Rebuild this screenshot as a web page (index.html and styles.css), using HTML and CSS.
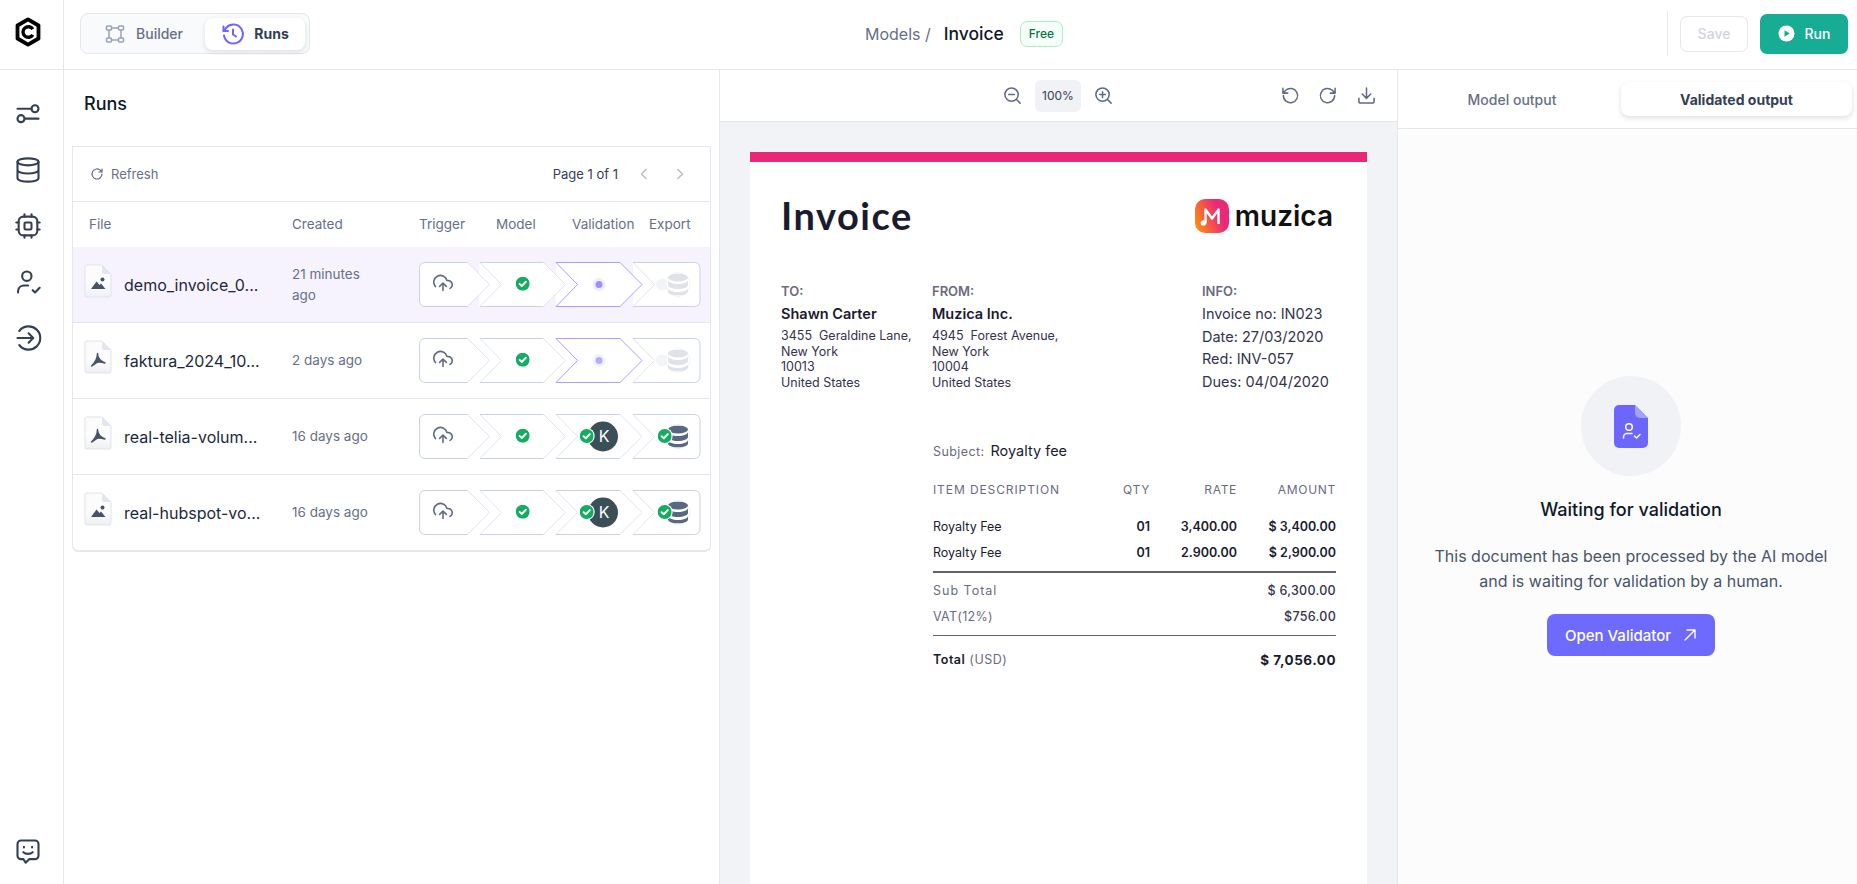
FILE: index.html
```html
<!DOCTYPE html>
<html lang="en">
<head>
    <meta charset="UTF-8">
    <title>Invoice - Runs</title>
    <link rel="stylesheet" href="styles.css">
</head>
<body>
    <svg class="defs" width="0" height="0">
        <defs>
            <linearGradient id="docGrad" x1="0" y1="0" x2="0" y2="1"><stop offset="0.6" stop-color="#fcfcfd"/><stop offset="1" stop-color="#eef0f4"/></linearGradient>
            <linearGradient id="brandGrad" x1="0" y1="0.7" x2="1" y2="0.3"><stop offset="0" stop-color="#ff8a12"/><stop offset="0.7" stop-color="#ea2a78"/></linearGradient>
        </defs>
        <symbol id="i-cloud" viewBox="0 0 24 24"><path d="M16 16l-4-4-4 4M12 12v9M20.4 18.4A5 5 0 0 0 18 9h-1.300A8 8 0 1 0 3 16.300" fill="none" stroke="#5f6b85" stroke-width="1.900" stroke-linecap="round" stroke-linejoin="round"/></symbol>
        <symbol id="i-check" viewBox="0 0 14 14"><circle cx="7" cy="7" r="7" fill="#12ad5e"/><path d="M3.900 7.200l2.200 2.100 4-4.200" fill="none" stroke="#fff" stroke-width="2" stroke-linecap="round" stroke-linejoin="round"/></symbol>
        <symbol id="i-db" viewBox="0 0 20 22"><ellipse cx="10" cy="4" rx="10" ry="4" fill="currentColor"/><path d="M0 6.500c0 2.200 4.500 4 10 4s10-1.800 10-4v5c0 2.200-4.500 4-10 4s-10-1.800-10-4zM0 14.500c0 2.200 4.500 4 10 4s10-1.800 10-4V18c0 2.200-4.500 4-10 4S0 20.200 0 18z" fill="currentColor"/></symbol>
        <symbol id="i-image" viewBox="0 0 28 34"><path d="M1 3a2 2 0 0 1 2-2h15l9 9v21a2 2 0 0 1-2 2H3a2 2 0 0 1-2-2z" fill="url(#docGrad)" stroke="#dfe3ea"/><path d="M18 1v7a2 2 0 0 0 2 2h7z" fill="#e3e6ec"/><path d="M7 25l5.500-7.500 3 3.500 1.500-1.500 4.500 5.500z" fill="#475467"/><circle cx="18.500" cy="15.500" r="2" fill="#475467"/></symbol>
        <symbol id="i-pdf" viewBox="0 0 28 34"><path d="M1 3a2 2 0 0 1 2-2h15l9 9v21a2 2 0 0 1-2 2H3a2 2 0 0 1-2-2z" fill="url(#docGrad)" stroke="#dfe3ea"/><path d="M18 1v7a2 2 0 0 0 2 2h7z" fill="#e3e6ec"/><path d="M13.500 13.500c0 3 1 6.500 7.500 9.500-3.500-1-6.500-1.500-8-.5-1.500 1-3.500 2.500-5.500 3.500 2.500-2.500 6-6.500 6-12.500z" fill="#475467" stroke="#475467" stroke-width="1.400" stroke-linejoin="round"/></symbol>
        <symbol id="i-pipe" viewBox="0 0 282 45">
            <path class="seg" d="M214 .5H275.500A5.500 5.500 0 0 1 281 6V39A5.500 5.500 0 0 1 275.500 44.500H214z"/>
            <path class="seg" d="M137 .5H201L223 22.500 201 44.500H137z"/>
            <path class="seg" d="M60 .5H124.500L146.500 22.500 124.500 44.500H60z"/>
            <path class="seg" d="M6 .5H48.500L70.500 22.500 48.500 44.500H6A5.500 5.500 0 0 1 .5 39V6A5.500 5.500 0 0 1 6 .5z"/>
            <path class="edge" d="M48.500 .5H6A5.500 5.500 0 0 0 .5 6V39A5.500 5.500 0 0 0 6 44.500H48.500"/>
            <path class="diag" d="M48.500 .5L70.500 22.500 48.500 44.500"/>
            <path class="edge" d="M61 .5H124.500M61 44.500H124.500"/>
            <path class="diag" d="M61 .5L82.500 22.500 61 44.500M124.500 .5L146.500 22.500 124.500 44.500"/>
            <path class="edge" d="M214 .5H275.500A5.500 5.500 0 0 1 281 6V39A5.500 5.500 0 0 1 275.500 44.500H214"/>
            <path class="diag" d="M214 .5L235.500 22.500 214 44.500"/>
            <use href="#i-cloud" x="14" y="11" width="20" height="20"/>
            <use href="#i-check" x="96.700" y="14.700" width="14" height="14"/>
        </symbol>
        <symbol id="i-pipe-waiting" viewBox="0 0 282 45">
            <use href="#i-pipe" width="282" height="45"/>
            <path class="active" d="M137 .5H201L223 22.500 201 44.500H137L158.500 22.500z"/>
            <circle cx="243" cy="22.500" r="6" fill="#f3f4f6"/>
            <circle cx="259" cy="22.500" r="12" fill="#fff" stroke="#f2f4f7"/>
            <use href="#i-db" x="249" y="11.500" width="20" height="22" color="#e0e2e6"/>
        </symbol>
        <symbol id="i-pipe-done" viewBox="0 0 282 45">
            <use href="#i-pipe" width="282" height="45"/>
            <path class="edge" d="M137 .5H201M137 44.500H201"/>
            <path class="diag" d="M137 .5L158.500 22.500 137 44.500M201 .5L223 22.500 201 44.500"/>
            <circle cx="184" cy="22.500" r="15" fill="#3b4f58"/>
            <circle cx="259" cy="22.500" r="12" fill="#fff" stroke="#eef0f4"/>
            <use href="#i-db" x="249" y="11.500" width="20" height="22" color="#5a6783"/>
            <circle cx="245.700" cy="22" r="8" fill="#fff"/>
            <use href="#i-check" x="238.700" y="15" width="14" height="14"/>
        </symbol>
        <symbol id="i-pipe-badge" viewBox="0 0 282 45">
            <circle cx="167.700" cy="22" r="8" fill="#fff"/>
            <use href="#i-check" x="160.700" y="15" width="14" height="14"/>
        </symbol>
    </svg>

    <header class="topbar">
        <div class="logo-cell">
            <svg width="26" height="30" viewBox="0 0 26 30"><path d="M13 2.300L23.500 8.500V21.500L13 27.700 2.500 21.500V8.500z" fill="#fff" stroke="#000" stroke-width="3.800" stroke-linejoin="round"/><path d="M17.800 12.200A5.300 5.300 0 1 0 17.800 17.800" fill="none" stroke="#000" stroke-width="3.400"/></svg>
        </div>
        <div class="mode-tabs">
            <div class="mode-tab">
                <svg width="20" height="20" viewBox="0 0 20 20" fill="none" stroke="#98a2b3" stroke-width="1.500"><rect x="1.500" y="2" width="5" height="4" rx="1"/><rect x="13.500" y="2" width="5" height="4" rx="1"/><rect x="1.500" y="14" width="5" height="4" rx="1"/><rect x="13.500" y="14" width="5" height="4" rx="1"/><path d="M6.500 4h7M6.500 16h7M4 6v8M16 6v8"/></svg>
                Builder
            </div>
            <div class="mode-tab on">
                <svg width="24" height="24" viewBox="0 0 24 24" fill="none" stroke="#6c66ff" stroke-width="2" stroke-linecap="round" stroke-linejoin="round"><path d="M3 13.500A9.500 9.500 0 1 0 5.500 5.500L2.500 9"/><path d="M2.500 4.500V9H7"/><path d="M12 7.500V12.500L15 14.500"/></svg>
                Runs
            </div>
        </div>
        <div class="crumbs">
            <span class="crumb-parent">Models /</span>
            <span class="crumb-name">Invoice</span>
            <span class="badge-free">Free</span>
        </div>
        <div class="top-actions">
            <button class="btn-save">Save</button>
            <button class="btn-run">
                <svg width="17" height="17" viewBox="0 0 17 17"><circle cx="8.500" cy="8.500" r="8" fill="#fff"/><path d="M6.500 5.200v6.600l5.200-3.300z" fill="#17ad94"/></svg>
                Run
            </button>
        </div>
    </header>

    <div class="main">
        <nav class="sidebar">
            <svg class="nav-icon" viewBox="0 0 24 24"><path d="M3 7.500h12M9.500 16H21"/><circle cx="18" cy="7.500" r="3"/><circle cx="6" cy="16" r="3"/></svg>
            <svg class="nav-icon" viewBox="0 0 24 24"><ellipse cx="12" cy="5" rx="9" ry="3"/><path d="M21 12c0 1.700-4 3-9 3s-9-1.300-9-3M3 5v14c0 1.700 4 3 9 3s9-1.300 9-3V5"/></svg>
            <svg class="nav-icon" viewBox="0 0 24 24"><rect x="4" y="4" width="16" height="16" rx="4"/><rect x="9" y="9" width="6" height="6" rx="1"/><path d="M9 2v2M15 2v2M9 20v2M15 20v2M2 9h2M2 15h2M20 9h2M20 15h2"/></svg>
            <svg class="nav-icon" viewBox="0 0 24 24"><circle cx="11" cy="7" r="4"/><path d="M3.500 21v-1.500A5 5 0 0 1 8.500 15H12M16 19l2 2 4-4"/></svg>
            <svg class="nav-icon" viewBox="0 0 24 24"><path d="M3 12h13M12.500 8l4 4-4 4M4.500 6a10 10 0 1 1 0 12"/></svg>
            <svg class="nav-icon nav-bottom" viewBox="0 0 24 24"><path d="M6 3h12a3 3 0 0 1 3 3v10a3 3 0 0 1-3 3h-5l-3 3-2-3H6a3 3 0 0 1-3-3V6a3 3 0 0 1 3-3z"/><path d="M8 13c2 2 6 2 8 0M8.500 8.500v.5M15.500 8.500v.5"/></svg>
        </nav>

        <section class="runs-panel">
            <h1 class="runs-title">Runs</h1>
            <div class="runs-card">
                <div class="runs-tools">
                    <div class="refresh">
                        <svg width="14" height="14" viewBox="0 0 14 14" fill="none" stroke="#5f6b85" stroke-width="1.200" stroke-linecap="round" stroke-linejoin="round"><path d="M12 7a5 5 0 1 1-1.500-3.600L12 5M12 2v3H9"/></svg>
                        Refresh
                    </div>
                    <div class="pager">
                        <span>Page 1 of 1</span>
                        <svg width="10" height="14" viewBox="0 0 10 14" fill="none" stroke="#b4bac6" stroke-width="1.300"><path d="M7.500 2L2.500 7l5 5"/></svg>
                        <svg width="10" height="14" viewBox="0 0 10 14" fill="none" stroke="#b4bac6" stroke-width="1.300"><path d="M2.500 2l5 5-5 5"/></svg>
                    </div>
                </div>
                <div class="runs-row runs-head">
                    <div class="head-file">File</div>
                    <div>Created</div>
                    <div class="head-steps">
                        <span class="step-trigger">Trigger</span>
                        <span class="step-model">Model</span>
                        <span class="step-validation">Validation</span>
                        <span>Export</span>
                    </div>
                </div>
                <div class="runs-row is-selected">
                    <div class="file-cell"><svg class="file-icon"><use href="#i-image"/></svg>demo_invoice_0...</div>
                    <div class="created">21 minutes ago</div>
                    <svg class="pipe" viewBox="0 0 282 45">
                        <use href="#i-pipe-waiting" width="282" height="45"/>
                        <circle cx="180" cy="22.500" r="6.500" fill="#f1edff"/><circle cx="180" cy="22.500" r="3.500" fill="#9a90ff"/>
                    </svg>
                </div>
                <div class="runs-row">
                    <div class="file-cell"><svg class="file-icon"><use href="#i-pdf"/></svg>faktura_2024_10...</div>
                    <div class="created">2 days ago</div>
                    <svg class="pipe" viewBox="0 0 282 45">
                        <use href="#i-pipe-waiting" width="282" height="45"/>
                        <circle cx="180" cy="22.500" r="6.500" fill="#f3f0ff"/><circle cx="180" cy="22.500" r="3.500" fill="#b5adff"/>
                    </svg>
                </div>
                <div class="runs-row">
                    <div class="file-cell"><svg class="file-icon"><use href="#i-pdf"/></svg>real-telia-volum...</div>
                    <div class="created">16 days ago</div>
                    <svg class="pipe" viewBox="0 0 282 45">
                        <use href="#i-pipe-done" width="282" height="45"/>
                        <text x="185" y="28" class="avatar-k">K</text>
                        <use href="#i-pipe-badge" width="282" height="45"/>
                    </svg>
                </div>
                <div class="runs-row">
                    <div class="file-cell"><svg class="file-icon"><use href="#i-image"/></svg>real-hubspot-vo...</div>
                    <div class="created">16 days ago</div>
                    <svg class="pipe" viewBox="0 0 282 45">
                        <use href="#i-pipe-done" width="282" height="45"/>
                        <text x="185" y="28" class="avatar-k">K</text>
                        <use href="#i-pipe-badge" width="282" height="45"/>
                    </svg>
                </div>
            </div>
        </section>

        <section class="viewer">
            <div class="viewer-tools">
                <div class="zoom-group">
                    <svg class="tool-icon" viewBox="0 0 20 20"><circle cx="9" cy="9" r="7"/><path d="M14.200 14.200L18 18M6 9h6"/></svg>
                    <span class="zoom-value">100%</span>
                    <svg class="tool-icon" viewBox="0 0 20 20"><circle cx="9" cy="9" r="7"/><path d="M14.200 14.200L18 18M6 9h6M9 6v6"/></svg>
                </div>
                <div class="doc-actions">
                    <svg class="tool-icon" viewBox="0 0 20 20"><path d="M2.500 10A7.500 7.500 0 1 0 5 4.500L2 7.500M2 2.500v5h5"/></svg>
                    <svg class="tool-icon" viewBox="0 0 20 20"><path d="M17.500 10A7.500 7.500 0 1 1 15 4.500l3 3M18 2.500v5h-5"/></svg>
                    <svg class="tool-icon" viewBox="0 0 20 20"><path d="M2 13v3a2 2 0 0 0 2 2h12a2 2 0 0 0 2-2v-3M10 2v11M5.500 8.500L10 13l4.500-4.500"/></svg>
                </div>
            </div>
            <div class="viewer-body">
                <article class="invoice">
                    <div class="inv-bar"></div>
                    <div class="inv-top">
                        <div class="inv-title">Invoice</div>
                        <div class="inv-brand">
                            <svg width="34" height="34" viewBox="0 0 34 34"><rect width="34" height="34" rx="10" fill="url(#brandGrad)"/><path d="M10.500 24V10.500l6.500 9 6.500-9V25" fill="none" stroke="#fff" stroke-width="2.400" stroke-linejoin="round"/><circle cx="8.500" cy="24" r="2.800" fill="#fff"/></svg>
                            <span>muzica</span>
                        </div>
                    </div>
                    <div class="inv-parties">
                        <div class="party party-to">
                            <div class="party-label">TO:</div>
                            <div class="party-name">Shawn Carter</div>
                            <div class="party-addr">3455&nbsp; Geraldine Lane,<br>New York<br>10013<br>United States</div>
                        </div>
                        <div class="party party-from">
                            <div class="party-label">FROM:</div>
                            <div class="party-name">Muzica Inc.</div>
                            <div class="party-addr">4945&nbsp; Forest Avenue,<br>New York<br>10004<br>United States</div>
                        </div>
                        <div class="party">
                            <div class="party-label">INFO:</div>
                            <div class="party-info">Invoice no: IN023<br>Date: 27/03/2020<br>Red: INV-057<br>Dues: 04/04/2020</div>
                        </div>
                    </div>
                    <div class="inv-lines">
                        <div class="inv-subject"><span>Subject:</span> Royalty fee</div>
                        <div class="line-grid line-head"><span>ITEM DESCRIPTION</span><span>QTY</span><span>RATE</span><span>AMOUNT</span></div>
                        <div class="line-grid line-item"><span>Royalty Fee</span><b>01</b><b>3,400.00</b><b>$ 3,400.00</b></div>
                        <div class="line-grid line-item"><span>Royalty Fee</span><b>01</b><b>2.900.00</b><b>$ 2,900.00</b></div>
                        <div class="rule-thick"></div>
                        <div class="sum-row"><span class="sum-sub">Sub Total</span><b>$ 6,300.00</b></div>
                        <div class="sum-row"><span>VAT(12%)</span><b>$756.00</b></div>
                        <div class="rule-thin"></div>
                        <div class="sum-total"><span><b>Total</b> (USD)</span><b class="total-value">$ 7,056.00</b></div>
                    </div>
                </article>
            </div>
        </section>

        <section class="output">
            <div class="output-tabs">
                <div class="output-tab">Model output</div>
                <div class="output-tab on">Validated output</div>
            </div>
            <div class="output-body">
                <div class="wait-circle">
                    <svg width="34" height="43" viewBox="0 0 34 43"><path d="M5 0h16l13 13v25a5 5 0 0 1-5 5H5a5 5 0 0 1-5-5V5a5 5 0 0 1 5-5z" fill="#6c66ff"/><path d="M21 0l13 13h-8a5 5 0 0 1-5-5z" fill="#a5a1ff"/><circle cx="15" cy="22" r="3.300" fill="none" stroke="#fff" stroke-width="1.500"/><path d="M9.500 33v-1a3.500 3.500 0 0 1 3.500-3.500h5M20.500 31l2 2 3.500-3.500" fill="none" stroke="#fff" stroke-width="1.500" stroke-linecap="round" stroke-linejoin="round"/></svg>
                </div>
                <h2 class="wait-title">Waiting for validation</h2>
                <p class="wait-text">This document has been processed by the AI model<br>and is waiting for validation by a human.</p>
                <button class="btn-validator">
                    Open Validator
                    <svg width="14" height="14" viewBox="0 0 14 14" fill="none" stroke="#fff" stroke-width="1.400" stroke-linecap="round" stroke-linejoin="round"><path d="M2 12L12 2M4 2h8v8"/></svg>
                </button>
            </div>
        </section>
    </div>
</body>
</html>
```

FILE: styles.css
```css
* {
    box-sizing: border-box;
}

html, body {
    height: 100%;
}

body {
    margin: 0;
    display: flex;
    flex-direction: column;
    overflow: hidden;
    background: #fff;
    color: #101828;
    font-family: Inter, "Liberation Sans", sans-serif;
}

.defs {
    display: block;
    flex: none;
    height: 0;
}

/* top bar */
.topbar {
    flex: none;
    height: 70px;
    display: flex;
    align-items: center;
    border-bottom: 1px solid #e4e7ec;
}

.logo-cell {
    width: 64px;
    height: 100%;
    display: flex;
    align-items: center;
    justify-content: center;
    padding: 0 7px 6px 0;
    border-right: 1px solid #e4e7ec;
}

.mode-tabs {
    margin: 0 0 2px 16px;
    width: 230px;
    height: 41px;
    padding: 4px;
    display: flex;
    align-items: center;
    background: #f9fafb;
    border: 1px solid #e4e7ec;
    border-radius: 8px;
}

.mode-tab {
    display: flex;
    align-items: center;
    justify-content: center;
    gap: 11px;
    width: 120px;
    height: 32px;
    padding-right: 2px;
    font-size: 14px;
    font-weight: 500;
    color: #667085;
}

.mode-tab.on {
    width: 100px;
    padding-right: 0;
    gap: 9px;
    background: #fff;
    border-radius: 8px;
    box-shadow: 0 2px 5px rgba(16, 24, 40, 0.12);
    color: #344054;
    font-weight: 700;
}

.crumbs {
    margin: 0 0 2px 555px;
    display: flex;
    align-items: center;
}

.crumb-parent {
    font-size: 16px;
    color: #667085;
}

.crumb-name {
    margin-left: 13px;
    font-size: 17.500px;
    font-weight: 500;
    color: #101828;
}

.badge-free {
    margin-left: 16px;
    width: 43px;
    height: 26px;
    display: flex;
    align-items: center;
    justify-content: center;
    font-size: 12px;
    font-weight: 500;
    color: #067647;
    background: #f6fef9;
    border: 1px solid #abefc6;
    border-radius: 7px;
}

.top-actions {
    margin: 0 9px 2px auto;
    height: 45px;
    padding-left: 12px;
    display: flex;
    align-items: center;
    gap: 12px;
    border-left: 1px solid #e4e7ec;
}

.btn-save {
    width: 68px;
    height: 36px;
    font: 500 14px Inter, sans-serif;
    color: #d0d5dd;
    background: #fff;
    border: 1px solid #e4e7ec;
    border-radius: 7px;
}

.btn-run {
    width: 88px;
    height: 40px;
    display: flex;
    align-items: center;
    justify-content: center;
    gap: 10px;
    font: 500 14px Inter, sans-serif;
    color: #fff;
    background: #17ad94;
    border: none;
    border-radius: 7px;
}

/* main columns */
.main {
    flex: 1;
    min-height: 0;
    display: flex;
}

.sidebar {
    flex: none;
    width: 64px;
    padding: 30px 7px 19px 0;
    display: flex;
    flex-direction: column;
    align-items: center;
    gap: 28px;
    border-right: 1px solid #e4e7ec;
}

.nav-icon {
    width: 28px;
    height: 28px;
    fill: none;
    stroke: #344054;
    stroke-width: 1.800;
    stroke-linecap: round;
    stroke-linejoin: round;
}

.nav-bottom {
    margin-top: auto;
}

/* runs list */
.runs-panel {
    flex: none;
    width: 656px;
    padding: 22px 8px 0;
    border-right: 1px solid #e4e7ec;
}

.runs-title {
    margin: 0 0 30px 12px;
    font-size: 18px;
    line-height: 24px;
    font-weight: 500;
    color: #101828;
}

.runs-card {
    border: 1px solid #e4e7ec;
    border-bottom-width: 2px;
    border-radius: 0 0 6px 6px;
}

.runs-tools {
    height: 55px;
    padding: 0 25px 0 17px;
    display: flex;
    align-items: center;
    justify-content: space-between;
    border-bottom: 1px solid #e4e7ec;
}

.refresh {
    display: flex;
    align-items: center;
    gap: 7px;
    font-size: 13px;
    color: #667085;
}

.pager {
    display: flex;
    align-items: center;
    gap: 26px;
    font-size: 13px;
    color: #344054;
}

.pager span {
    margin-right: -5px;
}

.runs-row {
    height: 76px;
    display: grid;
    grid-template-columns: 219px 127px 282px;
    align-items: center;
    border-bottom: 1px solid #e4e7ec;
}

.runs-row:last-child {
    height: 75px;
    border-bottom: none;
}

.runs-head {
    height: 45px;
    padding-bottom: 2px;
    border-bottom: none;
    font-size: 13.500px;
    font-weight: 400;
    color: #667085;
}

.head-file {
    padding-left: 16px;
}

.head-steps {
    display: flex;
    white-space: nowrap;
}

.step-trigger {
    width: 77px;
}

.step-model {
    width: 76px;
}

.step-validation {
    width: 77px;
}

.is-selected {
    background: #f7f3fe;
}

.file-cell {
    padding-left: 11px;
    display: flex;
    align-items: center;
    gap: 12px;
    font-size: 16px;
    color: #1d2939;
    white-space: nowrap;
}

.file-icon {
    flex: none;
    width: 28px;
    height: 34px;
    margin-top: -8px;
}

.created {
    width: 80px;
    font-size: 13.500px;
    line-height: 21px;
    color: #667085;
}

.pipe {
    width: 282px;
    height: 45px;
}

.seg {
    fill: #fff;
}

.active {
    fill: none;
    stroke: #a99fff;
    stroke-width: 1;
}

.edge {
    fill: none;
    stroke: #c8d2e2;
    stroke-width: 1;
}

.diag {
    fill: none;
    stroke: #dfe4ee;
    stroke-width: 1;
}

.avatar-k {
    font-size: 16px;
    fill: #fff;
    text-anchor: middle;
}

/* document viewer */
.viewer {
    flex: none;
    width: 678px;
    display: flex;
    flex-direction: column;
    border-right: 1px solid #e4e7ec;
}

.viewer-tools {
    flex: none;
    height: 52px;
    padding: 0 21px 0 0;
    display: flex;
    align-items: center;
    border-bottom: 1px solid #e4e7ec;
}

.zoom-group {
    margin-left: 283px;
    display: flex;
    align-items: center;
    gap: 13px;
}

.zoom-value {
    width: 46px;
    height: 32px;
    display: flex;
    align-items: center;
    justify-content: center;
    font-size: 12px;
    color: #344054;
    background: #f0f2f6;
    border-radius: 6px;
}

.doc-actions {
    margin-left: auto;
    display: flex;
    align-items: center;
    gap: 18px;
}

.doc-actions svg:last-child {
    margin-left: 2px;
}

.tool-icon {
    width: 19px;
    height: 19px;
    fill: none;
    stroke: #5f6b85;
    stroke-width: 1.600;
    stroke-linecap: round;
    stroke-linejoin: round;
}

.viewer-body {
    flex: 1;
    min-height: 0;
    padding: 30px 30px 0;
    overflow: hidden;
    background: #f2f3f7;
}

.invoice {
    height: 100%;
    background: #fff;
}

.inv-bar {
    height: 10px;
    background: #ea2775;
}

.inv-top {
    height: 38px;
    margin-top: 35px;
    padding: 0 34px 0 31px;
    display: flex;
    align-items: center;
    justify-content: space-between;
}

.inv-title {
    margin-top: -2px;
    font-family: Lato, sans-serif;
    font-size: 38px;
    font-weight: 700;
    letter-spacing: 1.500px;
    color: #1b1b2f;
}

.inv-brand {
    display: flex;
    align-items: center;
    gap: 6px;
    font-size: 28px;
    font-weight: 600;
    color: #111;
}

.inv-parties {
    margin-top: 48px;
    padding-left: 31px;
    display: flex;
    height: 111px;
}

.party-to {
    width: 151px;
}

.party-from {
    width: 270px;
}

.party-label {
    font-size: 13px;
    line-height: 16px;
    font-weight: 600;
    color: #6b6b80;
}

.party-name {
    margin-top: 5px;
    font-size: 14.500px;
    line-height: 20px;
    font-weight: 600;
    color: #1b1b2f;
}

.party-addr {
    margin-top: 4px;
    font-size: 12.500px;
    line-height: 15.500px;
    color: #33334a;
}

.party-info {
    margin-top: 4px;
    font-size: 14.500px;
    line-height: 22.700px;
    color: #33334a;
}

.inv-lines {
    margin: 47px 31px 0 183px;
}

.inv-subject {
    font-size: 14.500px;
    line-height: 20px;
    color: #1b1b2f;
    font-weight: 400;
}

.inv-subject span {
    margin-right: 2px;
    font-size: 12.500px;
    letter-spacing: 0.400px;
    color: #6b6b80;
}

.line-grid {
    display: grid;
    grid-template-columns: 157px 60px 87px 99px;
    text-align: right;
}

.line-grid span:first-child {
    text-align: left;
}

.line-head {
    margin-top: 20px;
    margin-bottom: 16px;
    font-size: 12px;
    line-height: 16px;
    letter-spacing: 0.700px;
    color: #6b6b80;
}

.line-head span:first-child {
    letter-spacing: 0.900px;
}

.line-item {
    font-size: 12.500px;
    line-height: 26px;
    color: #1b1b2f;
}

.line-item b {
    font-weight: 600;
}

.rule-thick {
    margin-top: 5px;
    height: 2px;
    background: #5f5f75;
}

.sum-row {
    display: flex;
    justify-content: space-between;
    font-size: 12.500px;
    line-height: 26px;
    letter-spacing: 0.300px;
    color: #6b6b80;
}

.rule-thick + .sum-row {
    margin-top: 5px;
}

.sum-sub {
    letter-spacing: 1px;
}

.sum-row b {
    font-weight: 500;
    color: #33334a;
}

.rule-thin {
    margin-top: 5px;
    height: 1px;
    background: #5f5f75;
}

.sum-total {
    margin-top: 11px;
    display: flex;
    justify-content: space-between;
    font-size: 12.500px;
    line-height: 26px;
    letter-spacing: 0.500px;
    color: #6b6b80;
}

.sum-total b {
    color: #1b1b2f;
    font-weight: 600;
}

.sum-total .total-value {
    font-size: 13.500px;
    font-weight: 700;
}

/* output column */
.output {
    flex: 1;
    min-width: 0;
    display: flex;
    flex-direction: column;
    background: #fcfcfd;
}

.output-tabs {
    flex: none;
    height: 59px;
    padding: 12px 5px;
    display: flex;
    background: #fff;
    border-bottom: 1px solid #e4e7ec;
}

.output-tab {
    flex: 1;
    display: flex;
    align-items: center;
    justify-content: center;
    font-size: 14px;
    font-weight: 500;
    color: #667085;
}

.output-tab.on {
    flex: none;
    width: 231px;
    background: #fff;
    border-radius: 8px;
    box-shadow: 0 2px 5px rgba(16, 24, 40, 0.14);
    color: #344054;
    font-weight: 700;
}

.output-body {
    flex: 1;
    padding: 247px 0 0 7px;
    display: flex;
    flex-direction: column;
    align-items: center;
}

.wait-circle {
    width: 100px;
    height: 100px;
    display: flex;
    align-items: center;
    justify-content: center;
    background: #f0f2f6;
    border-radius: 50%;
}

.wait-title {
    margin: 22px 0;
    font-size: 18px;
    line-height: 24px;
    font-weight: 500;
    color: #101828;
}

.wait-text {
    margin: 0 0 20px;
    font-size: 16px;
    line-height: 25px;
    text-align: center;
    color: #475467;
}

.btn-validator {
    width: 168px;
    height: 42px;
    display: flex;
    align-items: center;
    justify-content: center;
    gap: 12px;
    font: 500 15px Inter, sans-serif;
    color: #fff;
    background: #6f6aff;
    border: none;
    border-radius: 8px;
}
```
